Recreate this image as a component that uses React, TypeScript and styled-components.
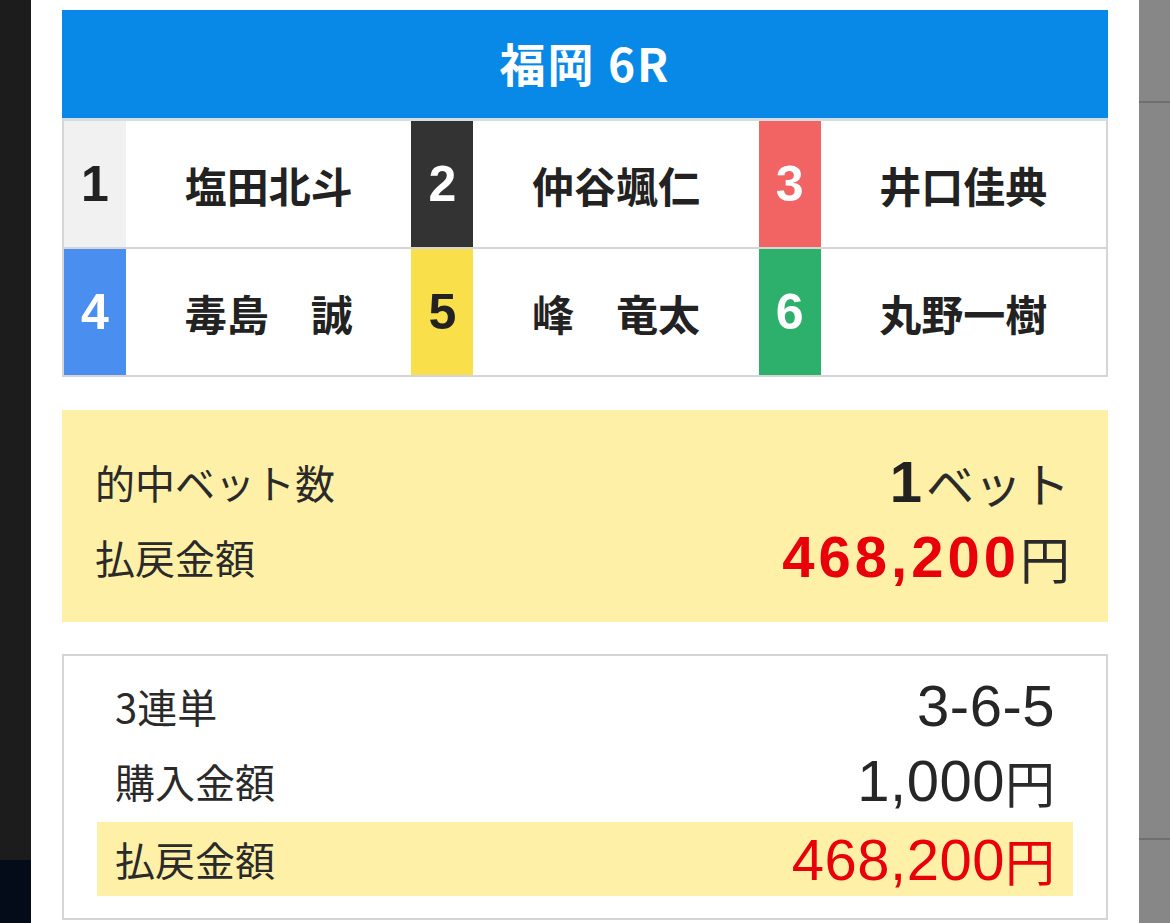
import React from 'react';
import styled, { createGlobalStyle } from 'styled-components';

const JP = "'Noto Sans CJK JP', sans-serif";
const NUM = "'Liberation Sans', 'Noto Sans CJK JP', sans-serif";

const GlobalStyle = createGlobalStyle`
  html, body, #root {
    margin: 0;
    height: 100%;
  }
  body {
    overflow: hidden;
    background: #ffffff;
    font-family: ${JP};
  }
`;

type Racer = { no: number; name: string; bg: string; fg: string };

const racers: Racer[] = [
  { no: 1, name: '塩田北斗', bg: '#f1f1f1', fg: '#222222' },
  { no: 2, name: '仲谷颯仁', bg: '#333333', fg: '#ffffff' },
  { no: 3, name: '井口佳典', bg: '#f26363', fg: '#ffffff' },
  { no: 4, name: '毒島　誠', bg: '#4a8ff0', fg: '#ffffff' },
  { no: 5, name: '峰　竜太', bg: '#f9e04b', fg: '#222222' },
  { no: 6, name: '丸野一樹', bg: '#2db06b', fg: '#ffffff' },
];

const Screen = styled.div`
  display: flex;
  height: 923px;
`;

const LeftEdge = styled.div`
  width: 31px;
  display: flex;
  flex-direction: column;
  background: #1c1c1c;
`;

const LeftFoot = styled.div`
  margin-top: auto;
  height: 63px;
  background: #030c18;
`;

const RightEdge = styled.div`
  width: 31px;
  display: flex;
  flex-direction: column;
  background: #878787;
`;

const EdgeBand = styled.div<{ $h: number }>`
  height: ${p => p.$h}px;
  flex-shrink: 0;
`;

const EdgeRule = styled.div`
  height: 2px;
  background: #6f6f6f;
`;

const Modal = styled.div`
  flex: 1;
  background: #ffffff;
  padding: 10px 31px 0;
  display: flex;
  flex-direction: column;
`;

const RaceHeader = styled.div`
  height: 108px;
  background: #0889e8;
  color: #ffffff;
  display: flex;
  align-items: center;
  justify-content: center;
  padding-bottom: 4px;
  box-sizing: border-box;
  font-family: ${JP};
  font-weight: 700;
  font-size: 46px;
  letter-spacing: 2px;
`;

const RacerGrid = styled.div`
  display: grid;
  grid-template-columns: repeat(3, 1fr);
  border: 2px solid #d5d5d5;
  border-top: 3px solid #d3dde6;
  background: #ffffff;
`;

const RacerCell = styled.div<{ $top: boolean }>`
  display: flex;
  height: 126px;
  border-top: ${p => (p.$top ? 'none' : '2px solid #d5d5d5')};
`;

const FrameNo = styled.div<{ $bg: string; $fg: string }>`
  width: 62px;
  flex-shrink: 0;
  background: ${p => p.$bg};
  color: ${p => p.$fg};
  display: flex;
  align-items: center;
  justify-content: center;
  font-family: ${NUM};
  font-weight: 700;
  font-size: 50px;
`;

const RacerName = styled.div`
  flex: 1;
  display: flex;
  align-items: center;
  justify-content: center;
  font-family: ${JP};
  font-weight: 700;
  font-size: 42px;
  color: #222222;
  white-space: pre;
`;

const Summary = styled.div`
  margin-top: 33px;
  background: #fff0a7;
  padding: 34px 38px 28px 33px;
`;

const Line = styled.div<{ $h: number }>`
  display: flex;
  align-items: center;
  justify-content: space-between;
  height: ${p => p.$h}px;
`;

const Label = styled.span`
  font-family: ${JP};
  font-size: 40px;
  color: #2a2a2a;
`;

const BoldFigure = styled.span<{ $red?: boolean }>`
  font-family: ${NUM};
  font-weight: 700;
  font-size: 58px;
  letter-spacing: 4px;
  color: ${p => (p.$red ? '#e8000b' : '#222222')};
`;

const Unit = styled.span<{ $size: number; $red?: boolean }>`
  font-family: ${JP};
  font-weight: 400;
  font-size: ${p => p.$size}px;
  color: ${p => (p.$red ? '#e8000b' : '#2a2a2a')};
  letter-spacing: 0;
`;

const Value = styled.span`
  display: flex;
  align-items: center;
`;

const Ticket = styled.div`
  margin-top: 32px;
  border: 2px solid #d5d5d5;
  padding: 12px 33px 22px;
`;

const TicketRow = styled.div<{ $hit?: boolean }>`
  display: flex;
  align-items: center;
  justify-content: space-between;
  height: ${p => (p.$hit ? 74 : 75)}px;
  margin-top: ${p => (p.$hit ? 4 : 0)}px;
  padding: 0 18px;
  background: ${p => (p.$hit ? '#fff0a7' : 'transparent')};
`;

const Figure = styled.span<{ $red?: boolean }>`
  font-family: ${NUM};
  font-size: 58px;
  letter-spacing: 0.5px;
  color: ${p => (p.$red ? '#e8000b' : '#262626')};
  display: flex;
  align-items: center;
`;

const App = () => (
  <>
    <GlobalStyle />
    <Screen>
      <LeftEdge>
        <LeftFoot />
      </LeftEdge>
      <Modal>
        <RaceHeader>福岡 6R</RaceHeader>
        <RacerGrid>
          {racers.map((r, i) => (
            <RacerCell key={r.no} $top={i < 3}>
              <FrameNo $bg={r.bg} $fg={r.fg}>{r.no}</FrameNo>
              <RacerName>{r.name}</RacerName>
            </RacerCell>
          ))}
        </RacerGrid>

        <Summary>
          <Line $h={75}>
            <Label>的中ベット数</Label>
            <Value>
              <BoldFigure>1</BoldFigure>
              <Unit $size={48}>ベット</Unit>
            </Value>
          </Line>
          <Line $h={75}>
            <Label>払戻金額</Label>
            <Value>
              <BoldFigure $red>468,200</BoldFigure>
              <Unit $size={50}>円</Unit>
            </Value>
          </Line>
        </Summary>

        <Ticket>
          <TicketRow>
            <Label>3連単</Label>
            <Figure>3-6-5</Figure>
          </TicketRow>
          <TicketRow>
            <Label>購入金額</Label>
            <Figure>
              1,000<Unit $size={50}>円</Unit>
            </Figure>
          </TicketRow>
          <TicketRow $hit>
            <Label>払戻金額</Label>
            <Figure $red>
              468,200<Unit $size={50} $red>円</Unit>
            </Figure>
          </TicketRow>
        </Ticket>
      </Modal>
      <RightEdge>
        <EdgeBand $h={101} />
        <EdgeRule />
        <EdgeBand $h={735} />
        <EdgeRule />
      </RightEdge>
    </Screen>
  </>
);

export default App;
